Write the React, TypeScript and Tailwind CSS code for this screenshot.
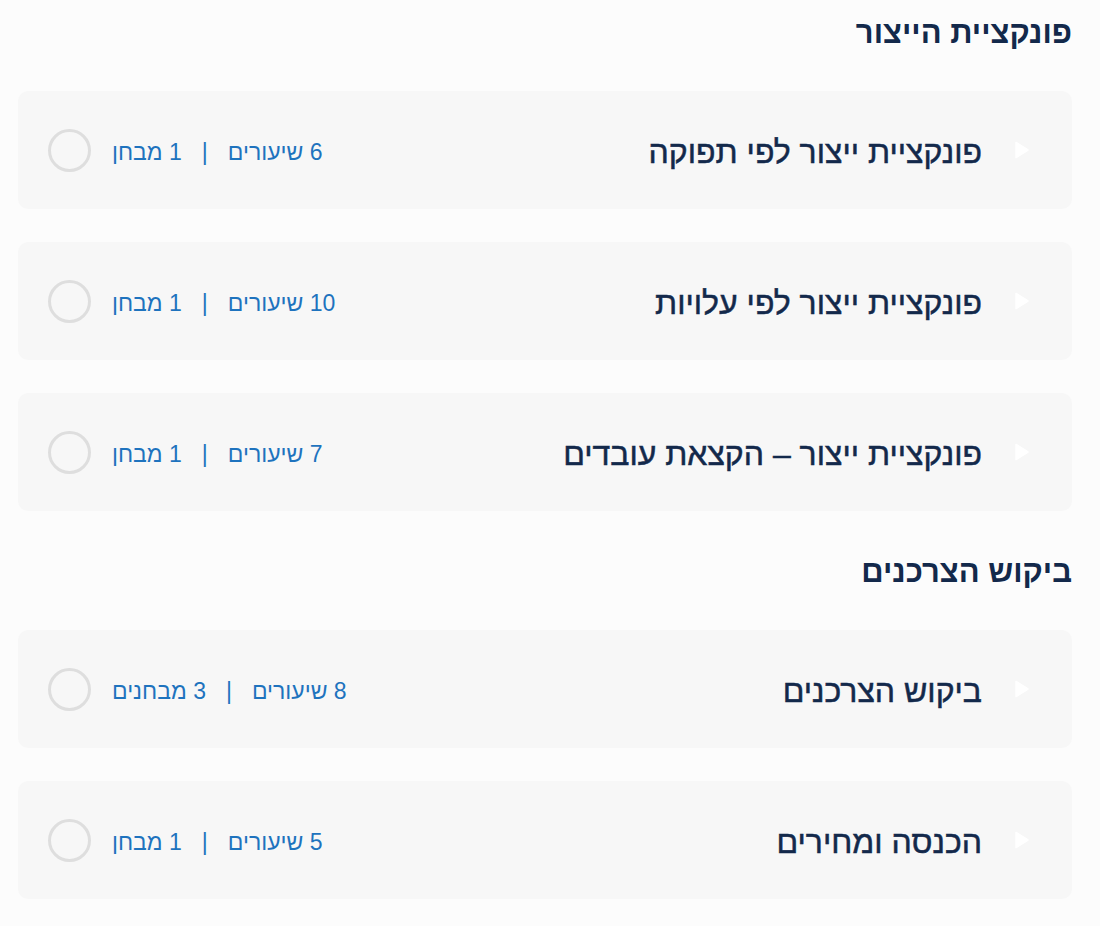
const sections = [
  {
    title: "פונקציית הייצור",
    items: [
      { name: "פונקציית ייצור לפי תפוקה", lessons: "6 שיעורים", exams: "1 מבחן" },
      { name: "פונקציית ייצור לפי עלויות", lessons: "10 שיעורים", exams: "1 מבחן" },
      { name: "פונקציית ייצור – הקצאת עובדים", lessons: "7 שיעורים", exams: "1 מבחן" },
    ],
  },
  {
    title: "ביקוש הצרכנים",
    items: [
      { name: "ביקוש הצרכנים", lessons: "8 שיעורים", exams: "3 מבחנים" },
      { name: "הכנסה ומחירים", lessons: "5 שיעורים", exams: "1 מבחן" },
    ],
  },
];

function Chapter({ name, lessons, exams }: { name: string; lessons: string; exams: string }) {
  return (
    <div className="flex h-[118px] items-center rounded-[10px] bg-[#f7f7f7] pr-[43px] pl-[30px] pt-[4px]">
      <svg width="14" height="18" viewBox="0 0 14 18" className="-mt-[4px] shrink-0">
        <path d="M1 1.5 L13 9 L1 16.5 Z" fill="#ffffff" stroke="#ffffff" strokeWidth="1.5" strokeLinejoin="round" />
      </svg>
      <div className="mr-[33px] text-[32px] leading-[40px] text-[#13294b] [-webkit-text-stroke:0.5px_#13294b]">
        {name}
      </div>
      <div className="mr-auto flex items-center gap-[20px] text-[23px] text-[#1e73be]">
        <span>{lessons}</span>
        <span>|</span>
        <span>{exams}</span>
      </div>
      <div className="-mt-[4px] mr-[21px] h-[43px] w-[43px] shrink-0 rounded-full border-[3px] border-[#dedede]" />
    </div>
  );
}

export default function App() {
  return (
    <div
      dir="rtl"
      className="min-h-[926px] bg-[#fcfcfc] pl-[18px] pr-[28px] pt-[13px]"
      style={{ fontFamily: '"Liberation Sans", "DejaVu Sans", sans-serif' }}
    >
      {sections.map((s, i) => (
        <section key={s.title} className={i > 0 ? "mt-[41px]" : ""}>
          <h2 className="mb-[38px] h-[40px] text-[31px] font-bold leading-[40px] text-[#13294b]">{s.title}</h2>
          <div className="flex flex-col gap-[33px]">
            {s.items.map((it) => (
              <Chapter key={it.name} {...it} />
            ))}
          </div>
        </section>
      ))}
    </div>
  );
}
